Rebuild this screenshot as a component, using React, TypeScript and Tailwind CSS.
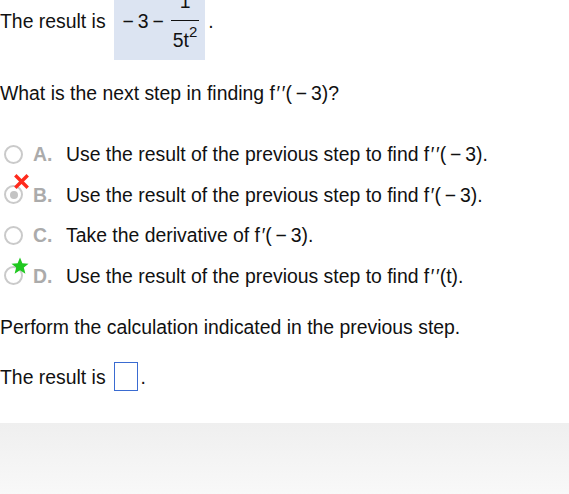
import React from 'react';

const P = '\u200a\u2032';
const PP = '\u200a\u2032\u200a\u2032';
const M3 = '(\u2009\u2212\u20093)';

const options = [
  { letter: 'A.', text: `Use the result of the previous step to find f${PP}${M3}.`, mark: 'none' },
  { letter: 'B.', text: `Use the result of the previous step to find f${P}${M3}.`, mark: 'wrong' },
  { letter: 'C.', text: `Take the derivative of f${P}${M3}.`, mark: 'none' },
  { letter: 'D.', text: `Use the result of the previous step to find f${PP}(t).`, mark: 'right' },
];

function Radio({ mark }: { mark: string }) {
  return (
    <div className="relative ml-[4px] w-[19px] h-[19px] shrink-0">
      <div className="w-[19px] h-[19px] rounded-full border-2 border-[#cacaca] bg-white flex items-center justify-center">
        {mark === 'wrong' && <div className="w-[8px] h-[8px] rounded-full bg-[#c4c4c4]" />}
      </div>
      {mark === 'wrong' && (
        <svg className="absolute left-[10px] -top-[11px]" width="15" height="15" viewBox="0 0 15 15">
          <path d="M2.5 2.5 L12.5 12.5 M12.5 2.5 L2.5 12.5" stroke="#ff2a1c" strokeWidth="3.4" strokeLinecap="square" />
        </svg>
      )}
      {mark === 'right' && (
        <svg className="absolute left-[7px] -top-[9px]" width="18" height="18" viewBox="0 0 16 16">
          <path
            d="M8 0.5 L10.1 5.6 L15.6 5.9 L11.4 9.4 L12.8 14.8 L8 11.8 L3.2 14.8 L4.6 9.4 L0.4 5.9 L5.9 5.6 Z"
            fill="#1fc81f"
          />
        </svg>
      )}
    </div>
  );
}

export default function App() {
  return (
    <div className="w-[569px] h-[494px] overflow-hidden bg-white text-[#111] text-[19.4px] leading-[22px] font-['Liberation_Sans',Arial,sans-serif]">
      <div className="-mt-[19px]">
        {/* first result with highlighted expression */}
        <div className="flex items-center">
          <span>The result is</span>
          <div className="ml-[8px] flex items-center bg-[#dce4f2] pl-[9px] pr-[6px] py-[9px]">
            <span>{'\u2212\u20093\u2009\u2212'}</span>
            <div className="ml-[7px] flex flex-col items-center">
              <div className="pb-[8px] px-[1px]">1</div>
              <div className="w-full h-px bg-[#111]" />
              <div className="pt-[8px] px-[2px]">
                5t<span className="relative -top-[10px] text-[15px] leading-none">2</span>
              </div>
            </div>
          </div>
          <span className="ml-[3px]">.</span>
        </div>

        <p className="mt-[22px]">What is the next step in finding f{PP}{M3}?</p>

        <div className="mt-[30px]">
          {options.map((o) => (
            <div key={o.letter} className="h-[40.5px] flex items-center">
              <Radio mark={o.mark} />
              <span className="ml-[10px] w-[33px] font-bold text-[#ababab]">{o.letter}</span>
              <span>{o.text}</span>
            </div>
          ))}
        </div>

        <p className="mt-[20px]">Perform the calculation indicated in the previous step.</p>

        <div className="mt-[24px] flex items-center">
          <span>The result is</span>
          <div className="ml-[8px] w-[24px] h-[29px] border border-[#3a6bd1] bg-white" />
          <span className="ml-[3px]">.</span>
        </div>

        <div className="mt-[32px] h-[90px] bg-gradient-to-b from-[#efefef] to-[#fbfbfb]" />
      </div>
    </div>
  );
}
